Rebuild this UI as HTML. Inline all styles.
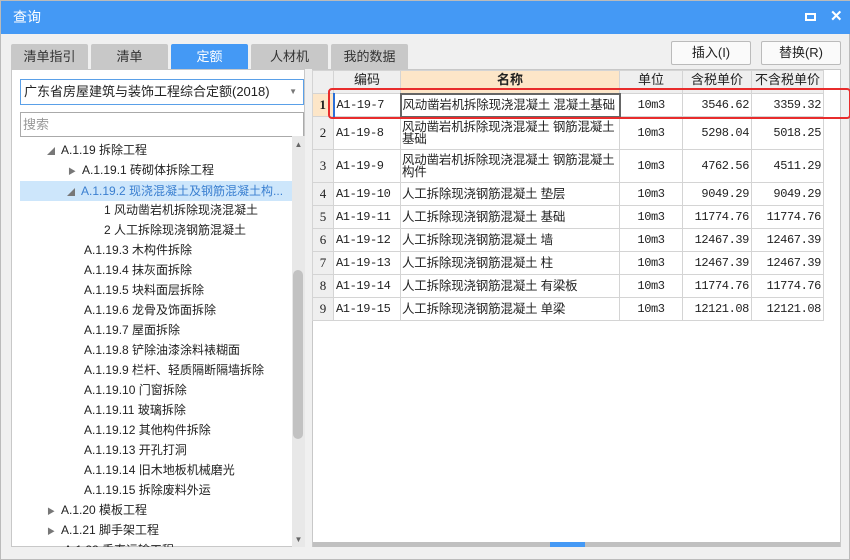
<!DOCTYPE html>
<html><head><meta charset="utf-8"><style>
*{margin:0;padding:0;box-sizing:border-box}
body{width:850px;height:560px;background:#f0f0f0;font-family:"Liberation Sans","Noto Sans CJK SC",sans-serif;font-size:12px;color:#222;position:relative;overflow:hidden;border:1px solid #bbb}
.a{position:absolute}
.title{left:0;top:0;width:850px;height:33px;background:#4499f5;color:#fff;font-size:14px;line-height:33px;padding-left:12px}
.tab{top:43px;height:25px;width:77px;background:#c8c8c8;text-align:center;line-height:25px;font-size:13px;color:#333;border-radius:2px 2px 0 0}
.btn{top:40px;height:24px;background:#fafafa;border:1px solid #bbb;border-radius:2px;text-align:center;line-height:22px;font-size:13px}
.left{left:10px;top:68px;width:294px;height:478px;background:#fff;border:1px solid #c8c8c8}
.tr{position:absolute;height:20px;line-height:20px;font-size:12px;white-space:nowrap}
.tbl{left:311px;top:68px;width:529px;height:478px;background:#fff;border:1px solid #c8c8c8}
table{border-collapse:collapse;position:absolute;left:-1px;top:0;font-size:12px;table-layout:fixed;width:511px}
td{border:1px solid #d4d4d4;padding:0 2px;height:23px;line-height:12px;overflow:hidden;white-space:nowrap}
td.w{white-space:normal;font-size:12.5px;padding:0 1px;letter-spacing:-0.2px}
th{border:1px solid #d4d4d4;height:23px;font-weight:normal;font-size:13px;background:#efefef;white-space:nowrap;overflow:hidden;line-height:14px;vertical-align:top;padding-top:2px}
.m{font-family:"Liberation Mono","Noto Sans CJK SC",monospace;font-size:12px;letter-spacing:-0.4px}
.r{text-align:right}.c{text-align:center}
.n{background:#efefef;text-align:center;font-family:"Liberation Serif",serif;font-size:13px;padding:0}
</style></head><body>
<div class="a title">查询</div>
<div class="a" style="left:804px;top:12px;width:11px;height:8px;border:2px solid #fff"></div>
<div class="a" style="left:829px;top:6px;color:#fff;font-size:15px;font-weight:bold">✕</div>

<div class="a tab" style="left:10px">清单指引</div>
<div class="a tab" style="left:90px">清单</div>
<div class="a tab" style="left:170px;background:#4499f5;color:#fff">定额</div>
<div class="a tab" style="left:250px">人材机</div>
<div class="a tab" style="left:330px">我的数据</div>
<div class="a btn" style="left:670px;width:80px">插入(I)</div>
<div class="a btn" style="left:760px;width:80px">替换(R)</div>

<div class="a left">
 <div class="a" style="left:8px;top:9px;width:284px;height:26px;border:1px solid #5aa0e8;line-height:24px;padding-left:3px;font-size:13px">广东省房屋建筑与装饰工程综合定额(2018)<span style="position:absolute;right:6px;top:0;font-size:8px;color:#777">▼</span></div>
 <div class="a" style="left:8px;top:42px;width:284px;height:25px;border:1px solid #aaa;line-height:23px;padding-left:2px;color:#999;font-size:13px">搜索</div>
 <div class="a" style="left:8px;top:111px;width:272px;height:20px;background:#cde6fb"></div>
 <div class="tr" style="left:35px;top:70px"><span style="color:#777;font-size:8px">◢</span>&nbsp; A.1.19 拆除工程</div>
 <div class="tr" style="left:56px;top:90px"><span style="color:#777;font-size:8px">▶</span>&nbsp; A.1.19.1 砖砌体拆除工程</div>
 <div class="tr" style="left:55px;top:111px;color:#3a7fd0"><span style="color:#777;font-size:8px">◢</span>&nbsp; A.1.19.2 现浇混凝土及钢筋混凝土构...</div>
 <div class="tr" style="left:92px;top:130px">1 风动凿岩机拆除现浇混凝土</div>
 <div class="tr" style="left:92px;top:150px">2 人工拆除现浇钢筋混凝土</div>
 <div class="tr" style="left:72px;top:170px">A.1.19.3 木构件拆除</div>
 <div class="tr" style="left:72px;top:190px">A.1.19.4 抹灰面拆除</div>
 <div class="tr" style="left:72px;top:210px">A.1.19.5 块料面层拆除</div>
 <div class="tr" style="left:72px;top:230px">A.1.19.6 龙骨及饰面拆除</div>
 <div class="tr" style="left:72px;top:250px">A.1.19.7 屋面拆除</div>
 <div class="tr" style="left:72px;top:270px">A.1.19.8 铲除油漆涂料裱糊面</div>
 <div class="tr" style="left:72px;top:290px">A.1.19.9 栏杆、轻质隔断隔墙拆除</div>
 <div class="tr" style="left:72px;top:310px">A.1.19.10 门窗拆除</div>
 <div class="tr" style="left:72px;top:330px">A.1.19.11 玻璃拆除</div>
 <div class="tr" style="left:72px;top:350px">A.1.19.12 其他构件拆除</div>
 <div class="tr" style="left:72px;top:370px">A.1.19.13 开孔打洞</div>
 <div class="tr" style="left:72px;top:390px">A.1.19.14 旧木地板机械磨光</div>
 <div class="tr" style="left:72px;top:410px">A.1.19.15 拆除废料外运</div>
 <div class="tr" style="left:35px;top:430px"><span style="color:#777;font-size:8px">▶</span>&nbsp; A.1.20 模板工程</div>
 <div class="tr" style="left:35px;top:450px"><span style="color:#777;font-size:8px">▶</span>&nbsp; A.1.21 脚手架工程</div>
 <div class="tr" style="left:52px;top:470px;height:7px;overflow:hidden">A.1.22 垂直运输工程</div>
 <div class="a" style="left:280px;top:66px;width:13px;height:411px;background:#e8e8e8"></div>
 <div class="a" style="left:280px;top:70px;width:13px;font-size:8px;color:#666;text-align:center">▲</div>
 <div class="a" style="left:280px;top:465px;width:13px;font-size:8px;color:#666;text-align:center">▼</div>
 <div class="a" style="left:281px;top:200px;width:10px;height:169px;background:#c2c2c2;border-radius:5px"></div>
</div>

<div class="a tbl">
<table>
<colgroup><col style="width:21px"><col style="width:67px"><col style="width:219px"><col style="width:63px"><col style="width:69px"><col style="width:72px"></colgroup>
<tr><th></th><th>编码</th><th style="background:#fde6c8;font-weight:bold">名称</th><th>单位</th><th>含税单价</th><th>不含税单价</th></tr>
<tr><td class="n" style="background:#fde6c8;font-weight:bold">1</td><td class="m" style="border-left:2px solid #2a6fd8">A1-19-7</td><td class="w" style="border:2px solid #666">风动凿岩机拆除现浇混凝土 混凝土基础</td><td class="m c">10m3</td><td class="m r">3546.62</td><td class="m r">3359.32</td></tr>
<tr><td class="n" style="height:33px">2</td><td class="m">A1-19-8</td><td class="w">风动凿岩机拆除现浇混凝土 钢筋混凝土基础</td><td class="m c">10m3</td><td class="m r">5298.04</td><td class="m r">5018.25</td></tr>
<tr><td class="n" style="height:33px">3</td><td class="m">A1-19-9</td><td class="w">风动凿岩机拆除现浇混凝土 钢筋混凝土构件</td><td class="m c">10m3</td><td class="m r">4762.56</td><td class="m r">4511.29</td></tr>
<tr><td class="n">4</td><td class="m">A1-19-10</td><td class="w">人工拆除现浇钢筋混凝土 垫层</td><td class="m c">10m3</td><td class="m r">9049.29</td><td class="m r">9049.29</td></tr>
<tr><td class="n">5</td><td class="m">A1-19-11</td><td class="w">人工拆除现浇钢筋混凝土 基础</td><td class="m c">10m3</td><td class="m r">11774.76</td><td class="m r">11774.76</td></tr>
<tr><td class="n">6</td><td class="m">A1-19-12</td><td class="w">人工拆除现浇钢筋混凝土 墙</td><td class="m c">10m3</td><td class="m r">12467.39</td><td class="m r">12467.39</td></tr>
<tr><td class="n">7</td><td class="m">A1-19-13</td><td class="w">人工拆除现浇钢筋混凝土 柱</td><td class="m c">10m3</td><td class="m r">12467.39</td><td class="m r">12467.39</td></tr>
<tr><td class="n">8</td><td class="m">A1-19-14</td><td class="w">人工拆除现浇钢筋混凝土 有梁板</td><td class="m c">10m3</td><td class="m r">11774.76</td><td class="m r">11774.76</td></tr>
<tr><td class="n">9</td><td class="m">A1-19-15</td><td class="w">人工拆除现浇钢筋混凝土 单梁</td><td class="m c">10m3</td><td class="m r">12121.08</td><td class="m r">12121.08</td></tr>
</table>
<div class="a" style="left:0;top:472px;width:527px;height:5px;background:#c0c0c0"></div>
<div class="a" style="left:237px;top:472px;width:35px;height:5px;background:#4499f5"></div>
</div>
<div class="a" style="left:327px;top:87px;width:523px;height:31px;border:2px solid #e82c2c;border-radius:4px"></div>
</body></html>
